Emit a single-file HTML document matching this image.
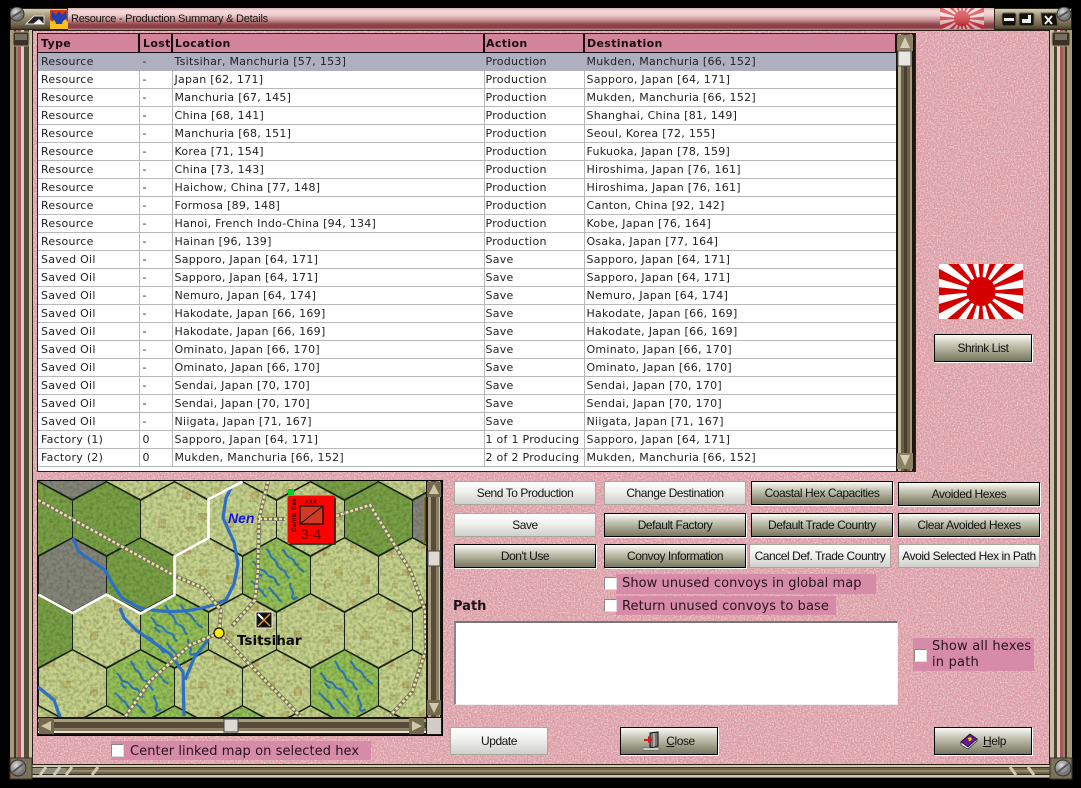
<!DOCTYPE html>
<html><head><meta charset="utf-8"><title>Resource - Production Summary &amp; Details</title>
<style>
*{box-sizing:border-box}
html,body{margin:0;padding:0;background:#000}
body{position:relative;width:1081px;height:788px;overflow:hidden;font-family:"DejaVu Sans","Liberation Sans",sans-serif;color:#111}
.a{position:absolute}
#tb{left:66px;top:8px;width:930px;height:22px;background:linear-gradient(#d9b0b0 0,#f3dada 12%,#f0d0d0 30%,#c79292 55%,#8e444a 75%,#8a3f45 90%,#c48a8a 100%)}
#title{left:71px;top:11px;font:11px/16px "Liberation Sans",sans-serif;letter-spacing:-.25px;color:#111;white-space:nowrap}
.wid{background:linear-gradient(#d6cfb2,#a09578 35%,#6e634b 80%,#4a4130);border:1px solid #2a241a}
#client{left:32px;top:30px;width:1018px;height:735px;background:#d89aa2;border:1px solid #2b2018}
table{border-collapse:collapse;table-layout:fixed;width:858px;font-size:11px;letter-spacing:.27px;background:#fff}
#list{left:38px;top:34px;width:858px;height:437px;overflow:hidden;background:#fff}
td,th{padding:0 0 0 3px;height:18px;line-height:17px;white-space:nowrap;overflow:hidden;text-align:left;border-right:1px solid #b8b8b8;border-bottom:1px solid #b8b8b8;color:#222}
th{background:#d2849b;font-weight:bold;letter-spacing:.35px;color:#1a0c14;border-right:2px solid #111;border-bottom:1px solid #111;border-left:0;height:18px;padding-top:1px}
td:nth-child(2),th:nth-child(2){padding-left:3px}
td:nth-child(3),th:nth-child(3){padding-left:2px}
td:nth-child(4),th:nth-child(4){padding-left:1px}
td:nth-child(5),th:nth-child(5){padding-left:2px}
tr.s td{background:#aeb0bf;border-color:#aeb0bf}
.btn{position:absolute;font:12px/1 "Liberation Sans",sans-serif;letter-spacing:-.45px;color:#111;text-align:center;display:flex;align-items:center;justify-content:center;white-space:nowrap}
.d{background:linear-gradient(#fcfcf6 0,#d6d6c8 25%,#a9a994 60%,#77775f 100%);border:1px solid #000;box-shadow:1px 1px 0 #fff}
.l{background:linear-gradient(#fff 0,#f1f1ef 40%,#cfcfcb 100%);border:1px solid #a9a99a}
.cb{position:absolute;width:13px;height:13px;background:#fff;border:1px solid #888;border-right-color:#ddd;border-bottom-color:#ddd}
.lab{position:absolute;background:#d68ca8;color:#2a1020;font-size:13px;line-height:17px;letter-spacing:.07px;white-space:nowrap}
</style></head><body>

<svg class="a" style="left:0;top:0" width="1081" height="788" viewBox="0 0 1081 788">
<defs><radialGradient id="scr" cx=".4" cy=".35"><stop offset="0" stop-color="#dcdcdc"/><stop offset="1" stop-color="#777"/></radialGradient></defs>
<!-- left frame -->
<rect x="10" y="30" width="4" height="738" fill="#a59a7c"/><rect x="14" y="30" width="2" height="738" fill="#3e3526"/>
<rect x="16" y="30" width="2" height="738" fill="#8f8569"/><rect x="18" y="30" width="3" height="738" fill="#a9555c"/>
<rect x="21" y="30" width="3" height="738" fill="#d8cdbf"/><rect x="24" y="30" width="5" height="738" fill="#564c3a"/>
<rect x="29" y="30" width="3" height="738" fill="#c9c2a8"/>
<rect x="13" y="32" width="16" height="14" rx="2" fill="#3a3226" stroke="#a59a7c"/>
<rect x="15" y="34" width="12" height="6" fill="#77705c"/>
<!-- right frame -->
<rect x="1050" y="30" width="4" height="738" fill="#c9c2a8"/><rect x="1054" y="30" width="3" height="738" fill="#4c4232"/>
<rect x="1057" y="30" width="3" height="738" fill="#d8cdbf"/><rect x="1060" y="30" width="3" height="738" fill="#a9555c"/>
<rect x="1063" y="30" width="2" height="738" fill="#8f8569"/><rect x="1065" y="30" width="2" height="738" fill="#3e3526"/>
<rect x="1067" y="30" width="5" height="738" fill="#a59a7c"/>
<rect x="1052" y="32" width="18" height="14" rx="2" fill="#3a3226" stroke="#a59a7c"/>
<rect x="1055" y="34" width="12" height="6" fill="#77705c"/>
<!-- bottom frame -->
<rect x="32" y="765" width="1018" height="13" fill="#8a7e60"/>
<rect x="32" y="765" width="1018" height="2" fill="#d2cbb2"/><rect x="32" y="767" width="1018" height="1" fill="#3a3226"/>
<rect x="32" y="768" width="1018" height="6" fill="#6f6349"/><rect x="32" y="770" width="1018" height="2" fill="#94886a"/>
<rect x="32" y="774" width="1018" height="1" fill="#2e281c"/><rect x="32" y="775" width="1018" height="2" fill="#d2cbb2"/>
<rect x="32" y="768" width="34" height="6" fill="#8c8c7c"/>
<g stroke="#d2cbb2" stroke-width="3"><path d="M46 767l-6 8M60 767l-6 8M72 767l-6 8M98 767l-6 8M1010 767l6 8M1028 767l6 8"/></g>
<!-- corners -->
<rect x="10" y="758" width="22" height="21" fill="#7b7158" stroke="#3a3226"/><circle cx="18" cy="768" r="8" fill="url(#scr)" stroke="#333"/><path d="M13 772l10-8" stroke="#555" stroke-width="2"/>
<rect x="1050" y="758" width="22" height="21" fill="#7b7158" stroke="#3a3226"/><circle cx="1063" cy="768" r="8" fill="url(#scr)" stroke="#333"/><path d="M1058 772l10-8" stroke="#555" stroke-width="2"/>
</svg>

<div class="a" id="tb"></div>
<div class="a wid" style="left:10px;top:8px;width:58px;height:22px"></div>
<svg class="a" style="left:10px;top:7px" width="60" height="24" viewBox="0 0 60 24">
<circle cx="7" cy="7" r="7" fill="url(#scr)" stroke="#333"/><path d="M2 10l10-6" stroke="#555" stroke-width="2"/>
<path d="M16 17l8-8h10v8z" fill="#222" stroke="#ddd"/><path d="M23 17l6-5 5 5z" fill="#f4f4f4"/>
<rect x="40" y="3" width="18" height="19" fill="#d83a10"/><path d="M40 22V13l3 2 2-5 3 4 3-5 2 5 2-2 3 3v7z" fill="#f6c020"/><path d="M42 4l4 4 3-4 3 4 4-4 1 7-4 3-1 3h-6l-1-3-4-3z" fill="#2340b0"/>
</svg>
<div class="a" id="title">Resource - Production Summary &amp; Details</div>
<svg class="a" style="left:940px;top:8px;opacity:.62" width="44" height="21" viewBox="0 0 44 21">
<rect width="44" height="21" fill="#f6eeee"/><circle cx="22" cy="10.5" r="25" fill="none" stroke="#d62a34" stroke-width="50" stroke-dasharray="4.909 4.909" stroke-dashoffset="2.454"/><circle cx="22" cy="10.5" r="8" fill="#d22a34"/>
</svg>
<div class="a wid" style="left:994px;top:8px;width:78px;height:22px"></div>
<svg class="a" style="left:994px;top:7px" width="78" height="24" viewBox="0 0 78 24">
<rect x="8" y="6" width="14" height="13" rx="2" fill="#15120c" stroke="#6a6250"/><rect x="10" y="11" width="10" height="3" fill="#eee"/>
<rect x="25" y="6" width="15" height="13" rx="2" fill="#15120c" stroke="#6a6250"/><path d="M28 16v-4h6V8h3v8z" fill="#eee"/>
<path d="M47 6h15l2 13H48z" fill="#15120c" stroke="#6a6250"/><path d="M51 9l7 8m0-8l-7 8" stroke="#eee" stroke-width="2"/>
<circle cx="70" cy="7" r="7" fill="url(#scr)" stroke="#333"/><path d="M65 10l10-6" stroke="#555" stroke-width="2"/>
</svg>

<!-- client -->
<div class="a" id="client"></div>
<svg class="a" style="left:33px;top:31px" width="1016" height="733"><filter id="nz" x="0" y="0" width="100%" height="100%" color-interpolation-filters="sRGB"><feTurbulence type="fractalNoise" baseFrequency=".7" numOctaves="2" seed="4"/><feColorMatrix values="0 0 0 0 1  0 0 0 0 .9  0 0 0 0 .92  1.7 0 0 0 -.65"/></filter><rect width="1016" height="733" filter="url(#nz)"/></svg>

<!-- list -->
<div class="a" style="left:37px;top:33px;width:879px;height:439px;background:#1b1710;border:1px solid #2a2418"></div>
<div class="a" id="list">
<table>
<colgroup><col style="width:101px"><col style="width:33px"><col style="width:312px"><col style="width:100px"><col style="width:312px"></colgroup>
<tr><th>Type</th><th>Lost</th><th>Location</th><th>Action</th><th>Destination</th></tr>
<tr class="s"><td>Resource</td><td>-</td><td>Tsitsihar, Manchuria [57, 153]</td><td>Production</td><td>Mukden, Manchuria [66, 152]</td></tr>
<tr><td>Resource</td><td>-</td><td>Japan [62, 171]</td><td>Production</td><td>Sapporo, Japan [64, 171]</td></tr>
<tr><td>Resource</td><td>-</td><td>Manchuria [67, 145]</td><td>Production</td><td>Mukden, Manchuria [66, 152]</td></tr>
<tr><td>Resource</td><td>-</td><td>China [68, 141]</td><td>Production</td><td>Shanghai, China [81, 149]</td></tr>
<tr><td>Resource</td><td>-</td><td>Manchuria [68, 151]</td><td>Production</td><td>Seoul, Korea [72, 155]</td></tr>
<tr><td>Resource</td><td>-</td><td>Korea [71, 154]</td><td>Production</td><td>Fukuoka, Japan [78, 159]</td></tr>
<tr><td>Resource</td><td>-</td><td>China [73, 143]</td><td>Production</td><td>Hiroshima, Japan [76, 161]</td></tr>
<tr><td>Resource</td><td>-</td><td>Haichow, China [77, 148]</td><td>Production</td><td>Hiroshima, Japan [76, 161]</td></tr>
<tr><td>Resource</td><td>-</td><td>Formosa [89, 148]</td><td>Production</td><td>Canton, China [92, 142]</td></tr>
<tr><td>Resource</td><td>-</td><td>Hanoi, French Indo-China [94, 134]</td><td>Production</td><td>Kobe, Japan [76, 164]</td></tr>
<tr><td>Resource</td><td>-</td><td>Hainan [96, 139]</td><td>Production</td><td>Osaka, Japan [77, 164]</td></tr>
<tr><td>Saved Oil</td><td>-</td><td>Sapporo, Japan [64, 171]</td><td>Save</td><td>Sapporo, Japan [64, 171]</td></tr>
<tr><td>Saved Oil</td><td>-</td><td>Sapporo, Japan [64, 171]</td><td>Save</td><td>Sapporo, Japan [64, 171]</td></tr>
<tr><td>Saved Oil</td><td>-</td><td>Nemuro, Japan [64, 174]</td><td>Save</td><td>Nemuro, Japan [64, 174]</td></tr>
<tr><td>Saved Oil</td><td>-</td><td>Hakodate, Japan [66, 169]</td><td>Save</td><td>Hakodate, Japan [66, 169]</td></tr>
<tr><td>Saved Oil</td><td>-</td><td>Hakodate, Japan [66, 169]</td><td>Save</td><td>Hakodate, Japan [66, 169]</td></tr>
<tr><td>Saved Oil</td><td>-</td><td>Ominato, Japan [66, 170]</td><td>Save</td><td>Ominato, Japan [66, 170]</td></tr>
<tr><td>Saved Oil</td><td>-</td><td>Ominato, Japan [66, 170]</td><td>Save</td><td>Ominato, Japan [66, 170]</td></tr>
<tr><td>Saved Oil</td><td>-</td><td>Sendai, Japan [70, 170]</td><td>Save</td><td>Sendai, Japan [70, 170]</td></tr>
<tr><td>Saved Oil</td><td>-</td><td>Sendai, Japan [70, 170]</td><td>Save</td><td>Sendai, Japan [70, 170]</td></tr>
<tr><td>Saved Oil</td><td>-</td><td>Niigata, Japan [71, 167]</td><td>Save</td><td>Niigata, Japan [71, 167]</td></tr>
<tr><td>Factory (1)</td><td>0</td><td>Sapporo, Japan [64, 171]</td><td>1 of 1 Producing</td><td>Sapporo, Japan [64, 171]</td></tr>
<tr><td>Factory (2)</td><td>0</td><td>Mukden, Manchuria [66, 152]</td><td>2 of 2 Producing</td><td>Mukden, Manchuria [66, 152]</td></tr>
</table>
</div>
<!-- list scrollbar -->
<svg class="a" style="left:896px;top:34px" width="18" height="437" viewBox="0 0 18 437">
<rect width="18" height="437" fill="#1b1710"/>
<rect x="2" y="0" width="3" height="437" fill="#bdb49a"/><rect x="5" y="0" width="3" height="437" fill="#6a5f49"/><rect x="8" y="0" width="3" height="437" fill="#4a4030"/><rect x="11" y="0" width="3" height="437" fill="#6a5f49"/><rect x="14" y="0" width="2" height="437" fill="#a59a7c"/>
<rect x="1" y="1" width="16" height="16" fill="#8b8063"/><path d="M9 3l5 11H4z" fill="#d6ceb4"/>
<rect x="1" y="419" width="16" height="16" fill="#8b8063"/><path d="M9 432l5-11H4z" fill="#d6ceb4"/>
<rect x="2" y="17" width="13" height="15" fill="#e8e6de" stroke="#555"/>
</svg>

<!-- right column -->
<svg class="a" style="left:939px;top:264px" width="84" height="55" viewBox="0 0 84 55">
<rect width="84" height="55" fill="#fff"/><circle cx="42" cy="27.5" r="50" fill="none" stroke="#d40000" stroke-width="100" stroke-dasharray="9.817 9.817" stroke-dashoffset="4.909"/><circle cx="42" cy="27.5" r="14.5" fill="#d40000"/>
</svg>
<div class="btn d" style="left:934px;top:334px;width:98px;height:28px">Shrink List</div>

<!-- map -->
<div class="a" style="left:37px;top:480px;width:406px;height:256px;background:#000"></div>
<svg class="a" style="left:38px;top:481px" width="388" height="236" viewBox="38 481 388 236">
<defs>
<polygon id="h" points="0,-37.5 34,-19.5 34,19 0,37.5 -34,19 -34,-19.5"/>
<filter id="tex" x="0" y="0" width="100%" height="100%" color-interpolation-filters="sRGB"><feTurbulence type="fractalNoise" baseFrequency=".3" numOctaves="2" seed="8" result="n"/><feColorMatrix in="n" values="0 0 0 0 .2  0 0 0 0 .3  0 0 0 0 .1  .8 0 0 0 -.3" result="d"/><feComposite in="d" in2="SourceGraphic" operator="in" result="dd"/><feMerge><feMergeNode in="SourceGraphic"/><feMergeNode in="dd"/></feMerge></filter>
<pattern id="cl" width="68" height="56" patternUnits="userSpaceOnUse" x="38" y="481"><rect width="68" height="56" fill="#c8d28e"/><g fill="#bfb874"><rect x="8" y="10" width="9" height="8"/><rect x="40" y="6" width="7" height="6"/><rect x="24" y="32" width="9" height="7"/><rect x="52" y="38" width="8" height="9"/><rect x="14" y="46" width="6" height="5"/></g></pattern>
<g id="sw"><use href="#h" fill="#96c058"/><path d="M-24-14c6 4 3 8 9 9s4 6 10 7 3 7 8 8M-10-26c5 4 2 7 7 10s2 8 8 10 3 7 8 9M6-26c4 4 3 7 8 9s3 6 8 8M-26 6c5 2 5 6 9 8s3 6 7 8M-8 12c4 3 3 5 7 8s2 5 6 6M14 8c-2 5 4 7 2 12s3 4 5 2M-20-4c3 2 2 4 6 5M22-8c2 3 4 3 6 5" fill="none" stroke="#2f7ac0" stroke-width="2.200"/></g>
</defs>
<g filter="url(#tex)">
<rect x="38" y="481" width="388" height="236" fill="url(#cl)"/>
<g fill="#7aa046">
<use href="#h" x="38.5" y="519"/><use href="#h" x="106.5" y="519"/><use href="#h" x="378.5" y="519"/><use href="#h" x="344.5" y="463"/><use href="#h" x="140.5" y="575"/><use href="#h" x="38.5" y="631"/>
</g>
<g fill="#85847c"><use href="#h" x="72.5" y="463"/><use href="#h" x="72.5" y="575"/><use href="#h" x="446.5" y="519"/></g>
<use href="#sw" x="276.5" y="575"/><use href="#sw" x="174.5" y="631"/><use href="#sw" x="140.5" y="687"/><use href="#sw" x="344.5" y="687"/><use href="#sw" x="174.5" y="743"/><use href="#sw" x="242.5" y="743"/>
</g>
<!-- hex grid -->
<g fill="none" stroke="#17231a" stroke-width="1">
<use href="#h" x="72.5" y="463"/><use href="#h" x="140.5" y="463"/><use href="#h" x="208.5" y="463"/><use href="#h" x="276.5" y="463"/><use href="#h" x="344.5" y="463"/><use href="#h" x="412.5" y="463"/>
<use href="#h" x="38.5" y="519"/><use href="#h" x="106.5" y="519"/><use href="#h" x="174.5" y="519"/><use href="#h" x="242.5" y="519"/><use href="#h" x="310.5" y="519"/><use href="#h" x="378.5" y="519"/><use href="#h" x="446.5" y="519"/>
<use href="#h" x="72.5" y="575"/><use href="#h" x="140.5" y="575"/><use href="#h" x="208.5" y="575"/><use href="#h" x="276.5" y="575"/><use href="#h" x="344.5" y="575"/><use href="#h" x="412.5" y="575"/>
<use href="#h" x="38.5" y="631"/><use href="#h" x="106.5" y="631"/><use href="#h" x="174.5" y="631"/><use href="#h" x="242.5" y="631"/><use href="#h" x="310.5" y="631"/><use href="#h" x="378.5" y="631"/><use href="#h" x="446.5" y="631"/>
<use href="#h" x="72.5" y="687"/><use href="#h" x="140.5" y="687"/><use href="#h" x="208.5" y="687"/><use href="#h" x="276.5" y="687"/><use href="#h" x="344.5" y="687"/><use href="#h" x="412.5" y="687"/>
<use href="#h" x="38.5" y="743"/><use href="#h" x="106.5" y="743"/><use href="#h" x="174.5" y="743"/><use href="#h" x="242.5" y="743"/><use href="#h" x="310.5" y="743"/><use href="#h" x="378.5" y="743"/>
</g>
<!-- rivers -->
<g fill="none" stroke="#2d6fc4" stroke-width="3.200">
<path d="M73 538l6 14 26 18 7 13 10 15 18 10c20 4 42 6 70-2l16-6 8-16 4-20-4-22-11-24 3-20 6-12"/>
<path d="M120 608l4 10 12 12 34 24 13 18 1 44"/><path d="M208 640l-14 18-9 22"/><path d="M38 687l16 13 6 17"/>
</g>
<!-- roads -->
<g fill="none">
<g stroke="#6f7468" stroke-width="4"><path d="M38 500L175 576l28 12 18 22-2 23M219 633l-29 12-40 36-25 36M219 633l82 84M268 481l-9 38-1 51-3 30-23 26M259 519h26M336 516l34-11 40 65 15 40 1 40-14 42-22 24"/></g>
<g stroke="#eee094" stroke-width="2.600" stroke-dasharray="3 2"><path d="M38 500L175 576l28 12 18 22-2 23M219 633l-29 12-40 36-25 36M219 633l82 84M268 481l-9 38-1 51-3 30-23 26M259 519h26M336 516l34-11 40 65 15 40 1 40-14 42-22 24"/></g>
</g>
<!-- white borders -->
<path d="M242.5 481.5L208.5 499.5v38.5l-34 18.500v38.500l-34 18.500L106.500 594.500l-34 18.500-34-18.500" fill="none" stroke="#fff" stroke-width="2.600"/>
<text x="228" y="523" font-family="'Liberation Sans',sans-serif" font-size="14" font-weight="bold" font-style="italic" fill="#1414e0">Nen</text>
<text x="237" y="645" font-family="'DejaVu Sans',sans-serif" font-size="13.500" font-weight="bold" fill="#0a0a0a">Tsitsihar</text>
<circle cx="219" cy="633" r="5" fill="#ffee00" stroke="#111" stroke-width="1.300"/>
<rect x="256" y="612" width="16" height="16" fill="#111" stroke="#eee"/><path d="M258 614l12 12m0-12l-12 12" stroke="#e59a2a" stroke-width="1.500"/><path d="M258 614l5 5" stroke="#fff" stroke-width="2"/>
<rect x="288" y="489" width="6" height="6" fill="#00d020"/>
<rect x="424" y="497" width="4" height="46" fill="#f00" stroke="#10d020"/>
<rect x="287.500" y="495.500" width="48" height="48" rx="2" fill="#f00" stroke="#10d030"/>
<path d="M290 544h45v-46" fill="none" stroke="#152015" stroke-width="1.500"/>
<rect x="300" y="506" width="23" height="18" fill="#cf3a24" stroke="#111" stroke-width="1.300"/><path d="M300 524l23-18" stroke="#111"/>
<text x="311" y="504" text-anchor="middle" font-family="'Liberation Sans',sans-serif" font-size="6" fill="#111">XXX</text>
<text x="311" y="539" text-anchor="middle" font-family="'Liberation Sans',sans-serif" font-size="14" fill="#6a0808">3-4</text>
<text transform="translate(296 532) rotate(-90)" font-family="'Liberation Sans',sans-serif" font-size="6.500" font-weight="bold" fill="#300">Comb. Cav</text>
</svg>
<!-- map scrollbars -->
<svg class="a" style="left:426px;top:481px" width="16" height="254" viewBox="0 0 16 254">
<rect width="16" height="254" fill="#1b1710"/>
<rect x="2" y="0" width="3" height="236" fill="#a89c7e"/><rect x="5" y="0" width="5" height="236" fill="#574c39"/><rect x="10" y="0" width="3" height="236" fill="#8b8063"/><rect x="13" y="0" width="1" height="236" fill="#c9c2a8"/>
<rect x="1" y="1" width="14" height="15" fill="#75694f"/><path d="M8 3l5 10H3z" fill="#cfc7aa"/>
<rect x="1" y="219" width="14" height="15" fill="#75694f"/><path d="M8 232l5-10H3z" fill="#cfc7aa"/>
<rect x="2" y="70" width="12" height="15" fill="#dcdad2" stroke="#444"/>
<rect x="1" y="237" width="14" height="16" fill="#d2ccc6"/>
</svg>
<svg class="a" style="left:38px;top:717px" width="388" height="18" viewBox="0 0 388 18">
<rect width="388" height="18" fill="#1b1710"/>
<rect x="0" y="2" width="388" height="3" fill="#a89c7e"/><rect x="0" y="5" width="388" height="6" fill="#574c39"/><rect x="0" y="11" width="388" height="3" fill="#8b8063"/><rect x="0" y="14" width="388" height="2" fill="#e8e2d0"/>
<rect x="1" y="1" width="15" height="16" fill="#75694f"/><path d="M3 9l10-5v10z" fill="#cfc7aa"/>
<rect x="371" y="1" width="15" height="16" fill="#75694f"/><path d="M384 9l-10-5v10z" fill="#cfc7aa"/>
<rect x="186" y="2" width="14" height="13" fill="#dcdad2" stroke="#444"/>
</svg>

<div class="lab" style="left:111px;top:741px;width:260px;height:19px;padding:2px 0 0 19px">Center linked map on selected hex</div>
<div class="cb" style="left:111px;top:744px"></div>

<!-- buttons -->
<div class="btn l" style="left:454px;top:481px;width:142px;height:24px">Send To Production</div>
<div class="btn l" style="left:604px;top:481px;width:142px;height:24px">Change Destination</div>
<div class="btn d" style="left:751px;top:481px;width:142px;height:24px">Coastal Hex Capacities</div>
<div class="btn d" style="left:898px;top:482px;width:142px;height:24px">Avoided Hexes</div>
<div class="btn l" style="left:454px;top:513px;width:142px;height:24px">Save</div>
<div class="btn d" style="left:604px;top:513px;width:142px;height:24px">Default Factory</div>
<div class="btn d" style="left:751px;top:513px;width:142px;height:24px">Default Trade Country</div>
<div class="btn d" style="left:898px;top:513px;width:142px;height:24px">Clear Avoided Hexes</div>
<div class="btn d" style="left:454px;top:544px;width:142px;height:24px">Don't Use</div>
<div class="btn d" style="left:604px;top:544px;width:142px;height:24px">Convoy Information</div>
<div class="btn l" style="left:749px;top:544px;width:142px;height:24px">Cancel Def. Trade Country</div>
<div class="btn l" style="left:898px;top:544px;width:142px;height:24px">Avoid Selected Hex in Path</div>

<div class="lab" style="left:604px;top:574px;width:272px;height:20px;padding:1px 0 0 18px;background:linear-gradient(90deg,transparent 12px,#d68ca8 12px)">Show unused convoys in global map</div>
<div class="cb" style="left:604px;top:577px"></div>
<div class="lab" style="left:604px;top:596px;width:232px;height:19px;padding:2px 0 0 18px;background:linear-gradient(90deg,transparent 12px,#d68ca8 12px)">Return unused convoys to base</div>
<div class="cb" style="left:604px;top:599px"></div>
<div class="a" style="left:453px;top:598px;font-size:13px;font-weight:bold;line-height:17px;color:#1c1018">Path</div>
<div class="a" style="left:454px;top:621px;width:444px;height:84px;background:#fff;border-top:2px solid #777;border-left:2px solid #888;border-right:1px solid #eee;border-bottom:1px solid #eee"></div>
<div class="lab" style="left:913px;top:638px;width:121px;height:33px;padding:1px 0 0 19px;line-height:16px;letter-spacing:.2px">Show all hexes<br>in path</div>
<div class="cb" style="left:914px;top:649px"></div>

<div class="btn l" style="left:450px;top:727px;width:98px;height:28px">Update</div>
<div class="btn d" style="left:620px;top:727px;width:98px;height:28px">
<svg width="18" height="20" viewBox="0 0 18 20" style="margin-right:5px"><path d="M7 2l8-1v14l-8 2z" fill="#777" stroke="#111"/><path d="M11 2v14" stroke="#ddd"/><path d="M1 8h4V5l5 4-5 3V10H1z" fill="#d81818"/><path d="M0 17h16v2H0z" fill="#fff" stroke="#333" stroke-width=".5"/></svg><span style="text-decoration:underline;text-decoration-thickness:1px">C</span>lose</div>
<div class="btn d" style="left:934px;top:727px;width:98px;height:28px">
<svg width="18" height="17" viewBox="0 0 18 17" style="margin-right:5px"><path d="M1 9l9-8 7 5-9 8z" fill="#6a1a90" stroke="#201030"/><path d="M1 9l0 3 7 4 9-8V6L8 14z" fill="#f4f0ff" stroke="#201030" stroke-width=".7"/><path d="M8 6l2-1 1 1-2 2" fill="none" stroke="#ffe000" stroke-width="1.500"/></svg><span style="text-decoration:underline;text-decoration-thickness:1px">H</span>elp</div>
</body></html>
